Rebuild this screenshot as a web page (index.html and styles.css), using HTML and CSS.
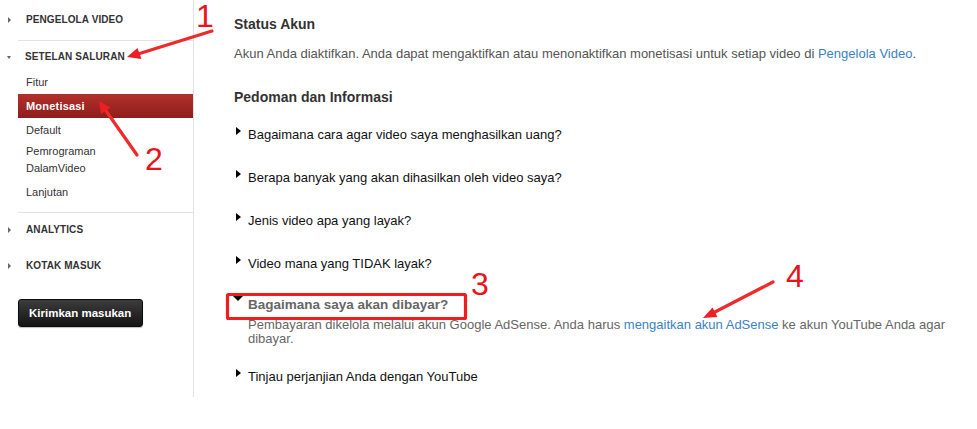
FILE: index.html
```html
<!DOCTYPE html>
<html lang="id">
<head>
<meta charset="utf-8">
<title>Monetisasi</title>
<link rel="stylesheet" href="styles.css">
</head>
<body>
<div class="page">
  <aside class="sidebar">
    <div class="nav-head head-first"><span class="tri-r"></span><span>PENGELOLA VIDEO</span></div>
    <div class="sep"></div>
    <div class="nav-head head-open"><span class="tri-d"></span><span>SETELAN SALURAN</span></div>
    <ul class="sub">
      <li class="sub-item">Fitur</li>
      <li class="sub-item active">Monetisasi</li>
      <li class="sub-item">Default</li>
      <li class="sub-item multi">Pemrograman<br>DalamVideo</li>
      <li class="sub-item">Lanjutan</li>
    </ul>
    <div class="sep sep-lower"></div>
    <div class="nav-head head-plain"><span class="tri-r"></span><span>ANALYTICS</span></div>
    <div class="nav-head head-plain"><span class="tri-r"></span><span>KOTAK MASUK</span></div>
    <button class="feedback">Kirimkan masukan</button>
  </aside>

  <main class="main">
    <h2 class="title">Status Akun</h2>
    <p class="status">Akun Anda diaktifkan. Anda dapat mengaktifkan atau menonaktifkan monetisasi untuk setiap video di <a class="link">Pengelola Video</a>.</p>
    <h2 class="title title-guide">Pedoman dan Informasi</h2>
    <ul class="faq">
      <li class="faq-item"><span class="ftri-r"></span><span>Bagaimana cara agar video saya menghasilkan uang?</span></li>
      <li class="faq-item"><span class="ftri-r"></span><span>Berapa banyak yang akan dihasilkan oleh video saya?</span></li>
      <li class="faq-item"><span class="ftri-r"></span><span>Jenis video apa yang layak?</span></li>
      <li class="faq-item"><span class="ftri-r"></span><span>Video mana yang TIDAK layak?</span></li>
      <li class="faq-open">
        <div class="faq-open-head"><span class="ftri-d"></span><span>Bagaimana saya akan dibayar?</span></div>
        <p class="answer">Pembayaran dikelola melalui akun Google AdSense. Anda harus <a class="link">mengaitkan akun AdSense</a> ke akun YouTube Anda agar dibayar.</p>
      </li>
      <li class="faq-item"><span class="ftri-r"></span><span>Tinjau perjanjian Anda dengan YouTube</span></li>
    </ul>
  </main>

  <svg class="annot" width="977" height="429" viewBox="0 0 977 429" aria-hidden="true">
    <g fill="#ec1f24" stroke="none">
      <line x1="212" y1="31" x2="138" y2="54" stroke="#ee2a2a" stroke-width="3.2" stroke-linecap="round"/>
      <polygon points="127,57 141.5,59 137.5,48"/>
      <line x1="137" y1="155" x2="104" y2="108" stroke="#ee2a2a" stroke-width="3.2" stroke-linecap="round"/>
      <polygon points="99,101 101,114 110.5,107.5"/>
      <line x1="773" y1="282" x2="713" y2="313" stroke="#ee2a2a" stroke-width="3.2" stroke-linecap="round"/>
      <polygon points="703,318 717.5,317 712.5,307.5"/>
      <rect x="227.5" y="294.5" width="238" height="24" fill="none" stroke="#f01d1d" stroke-width="3.2" rx="1"/>
      <text x="196" y="27" class="num">1</text>
      <text x="145" y="170" class="num">2</text>
      <text x="471" y="295" class="num">3</text>
      <text x="786" y="287" class="num">4</text>
    </g>
  </svg>
</div>
</body>
</html>
```

FILE: styles.css
```css
* { box-sizing: border-box; }

html, body {
  margin: 0;
  padding: 0;
  background: #fff;
}

body {
  font-family: "Liberation Sans", Arial, sans-serif;
  color: #333;
  width: 977px;
  height: 429px;
  overflow: hidden;
}

.page {
  position: relative;
  display: flex;
  align-items: flex-start;
  width: 977px;
  height: 429px;
}

/* ---------- Sidebar ---------- */
.sidebar {
  width: 194px;
  height: 397px;
  border-right: 1px solid #e3e3e3;
  flex: none;
  display: flex;
  flex-direction: column;
}

.nav-head {
  display: flex;
  align-items: center;
  font-size: 10px;
  font-weight: bold;
  line-height: 14px;
  color: #333;
  letter-spacing: 0.1px;
}

.head-first { padding: 13px 0 13px 0; }
.head-open { padding: 9px 0 6px 0; }
.head-plain { padding: 10px 0 12px 0; }

.tri-r {
  width: 0;
  height: 0;
  margin: 0 15px 0 8px;
  border-left: 3px solid #666;
  border-top: 3px solid transparent;
  border-bottom: 3px solid transparent;
}

.tri-d {
  width: 0;
  height: 0;
  margin: 0 14px 0 7px;
  border-top: 3px solid #666;
  border-left: 2.5px solid transparent;
  border-right: 2.5px solid transparent;
}

.sep {
  margin-left: 18px;
  border-top: 1px solid #e3e3e3;
}

.sep-lower { margin-top: 8px; }

.sub {
  list-style: none;
  margin: 0 0 0 18px;
  padding: 0;
}

.sub-item {
  font-size: 11px;
  line-height: 17px;
  padding: 3.5px 8px;
  color: #333;
}

.sub-item.multi { padding: 1px 8px 3px; }

.sub-item.active {
  background: linear-gradient(#b3302b, #8d1d1c);
  color: #fff;
  font-weight: bold;
  font-size: 11px;
  letter-spacing: 0.2px;
}

.feedback {
  align-self: flex-start;
  margin: 14px 0 0 18px;
  width: 125px;
  height: 28px;
  padding: 0 0 0 10px;
  text-align: left;
  font-family: "Liberation Sans", Arial, sans-serif;
  font-size: 11.5px;
  font-weight: bold;
  color: #fff;
  background: linear-gradient(#3c3c3c, #141414);
  border: 1px solid #0c0c0c;
  border-radius: 3px;
  box-shadow: 0 1px 1px rgba(0,0,0,0.25);
}

/* ---------- Main ---------- */
.main {
  flex: 1;
  padding: 16px 17px 0 40px;
}

.title {
  margin: 0;
  font-size: 14px;
  font-weight: bold;
  line-height: 17px;
  color: #333;
}

.title-guide { margin-top: 27px; }

.status {
  margin: 12px 0 0;
  font-size: 13px;
  line-height: 17px;
  color: #555;
}

.link {
  color: #3b82c4;
  text-decoration: none;
}

.faq {
  list-style: none;
  margin: 20px 0 0;
  padding: 0;
}

.faq-item {
  display: flex;
  align-items: flex-start;
  font-size: 13px;
  line-height: 17px;
  color: #111;
  margin-bottom: 26px;
}

.ftri-r {
  flex: none;
  width: 0;
  height: 0;
  margin: 1px 7px 0 2px;
  border-left: 5px solid #000;
  border-top: 4px solid transparent;
  border-bottom: 4px solid transparent;
}

.faq-open { margin: -2px 0 22px; }

.faq-open-head {
  display: flex;
  align-items: flex-start;
  font-size: 13.5px;
  font-weight: bold;
  line-height: 17px;
  color: #666;
}

.ftri-d {
  flex: none;
  width: 0;
  height: 0;
  margin: 0 5px 0 -1px;
  border-top: 5px solid #000;
  border-left: 5px solid transparent;
  border-right: 5px solid transparent;
}

.answer {
  margin: 4.5px 0 0 14px;
  font-size: 13px;
  line-height: 14px;
  color: #666;
}

/* ---------- Annotation overlay ---------- */
.annot {
  position: absolute;
  left: 0;
  top: 0;
  pointer-events: none;
}

.num {
  font-family: "Liberation Sans", Arial, sans-serif;
  font-size: 32px;
  fill: #e8141c;
}
```
